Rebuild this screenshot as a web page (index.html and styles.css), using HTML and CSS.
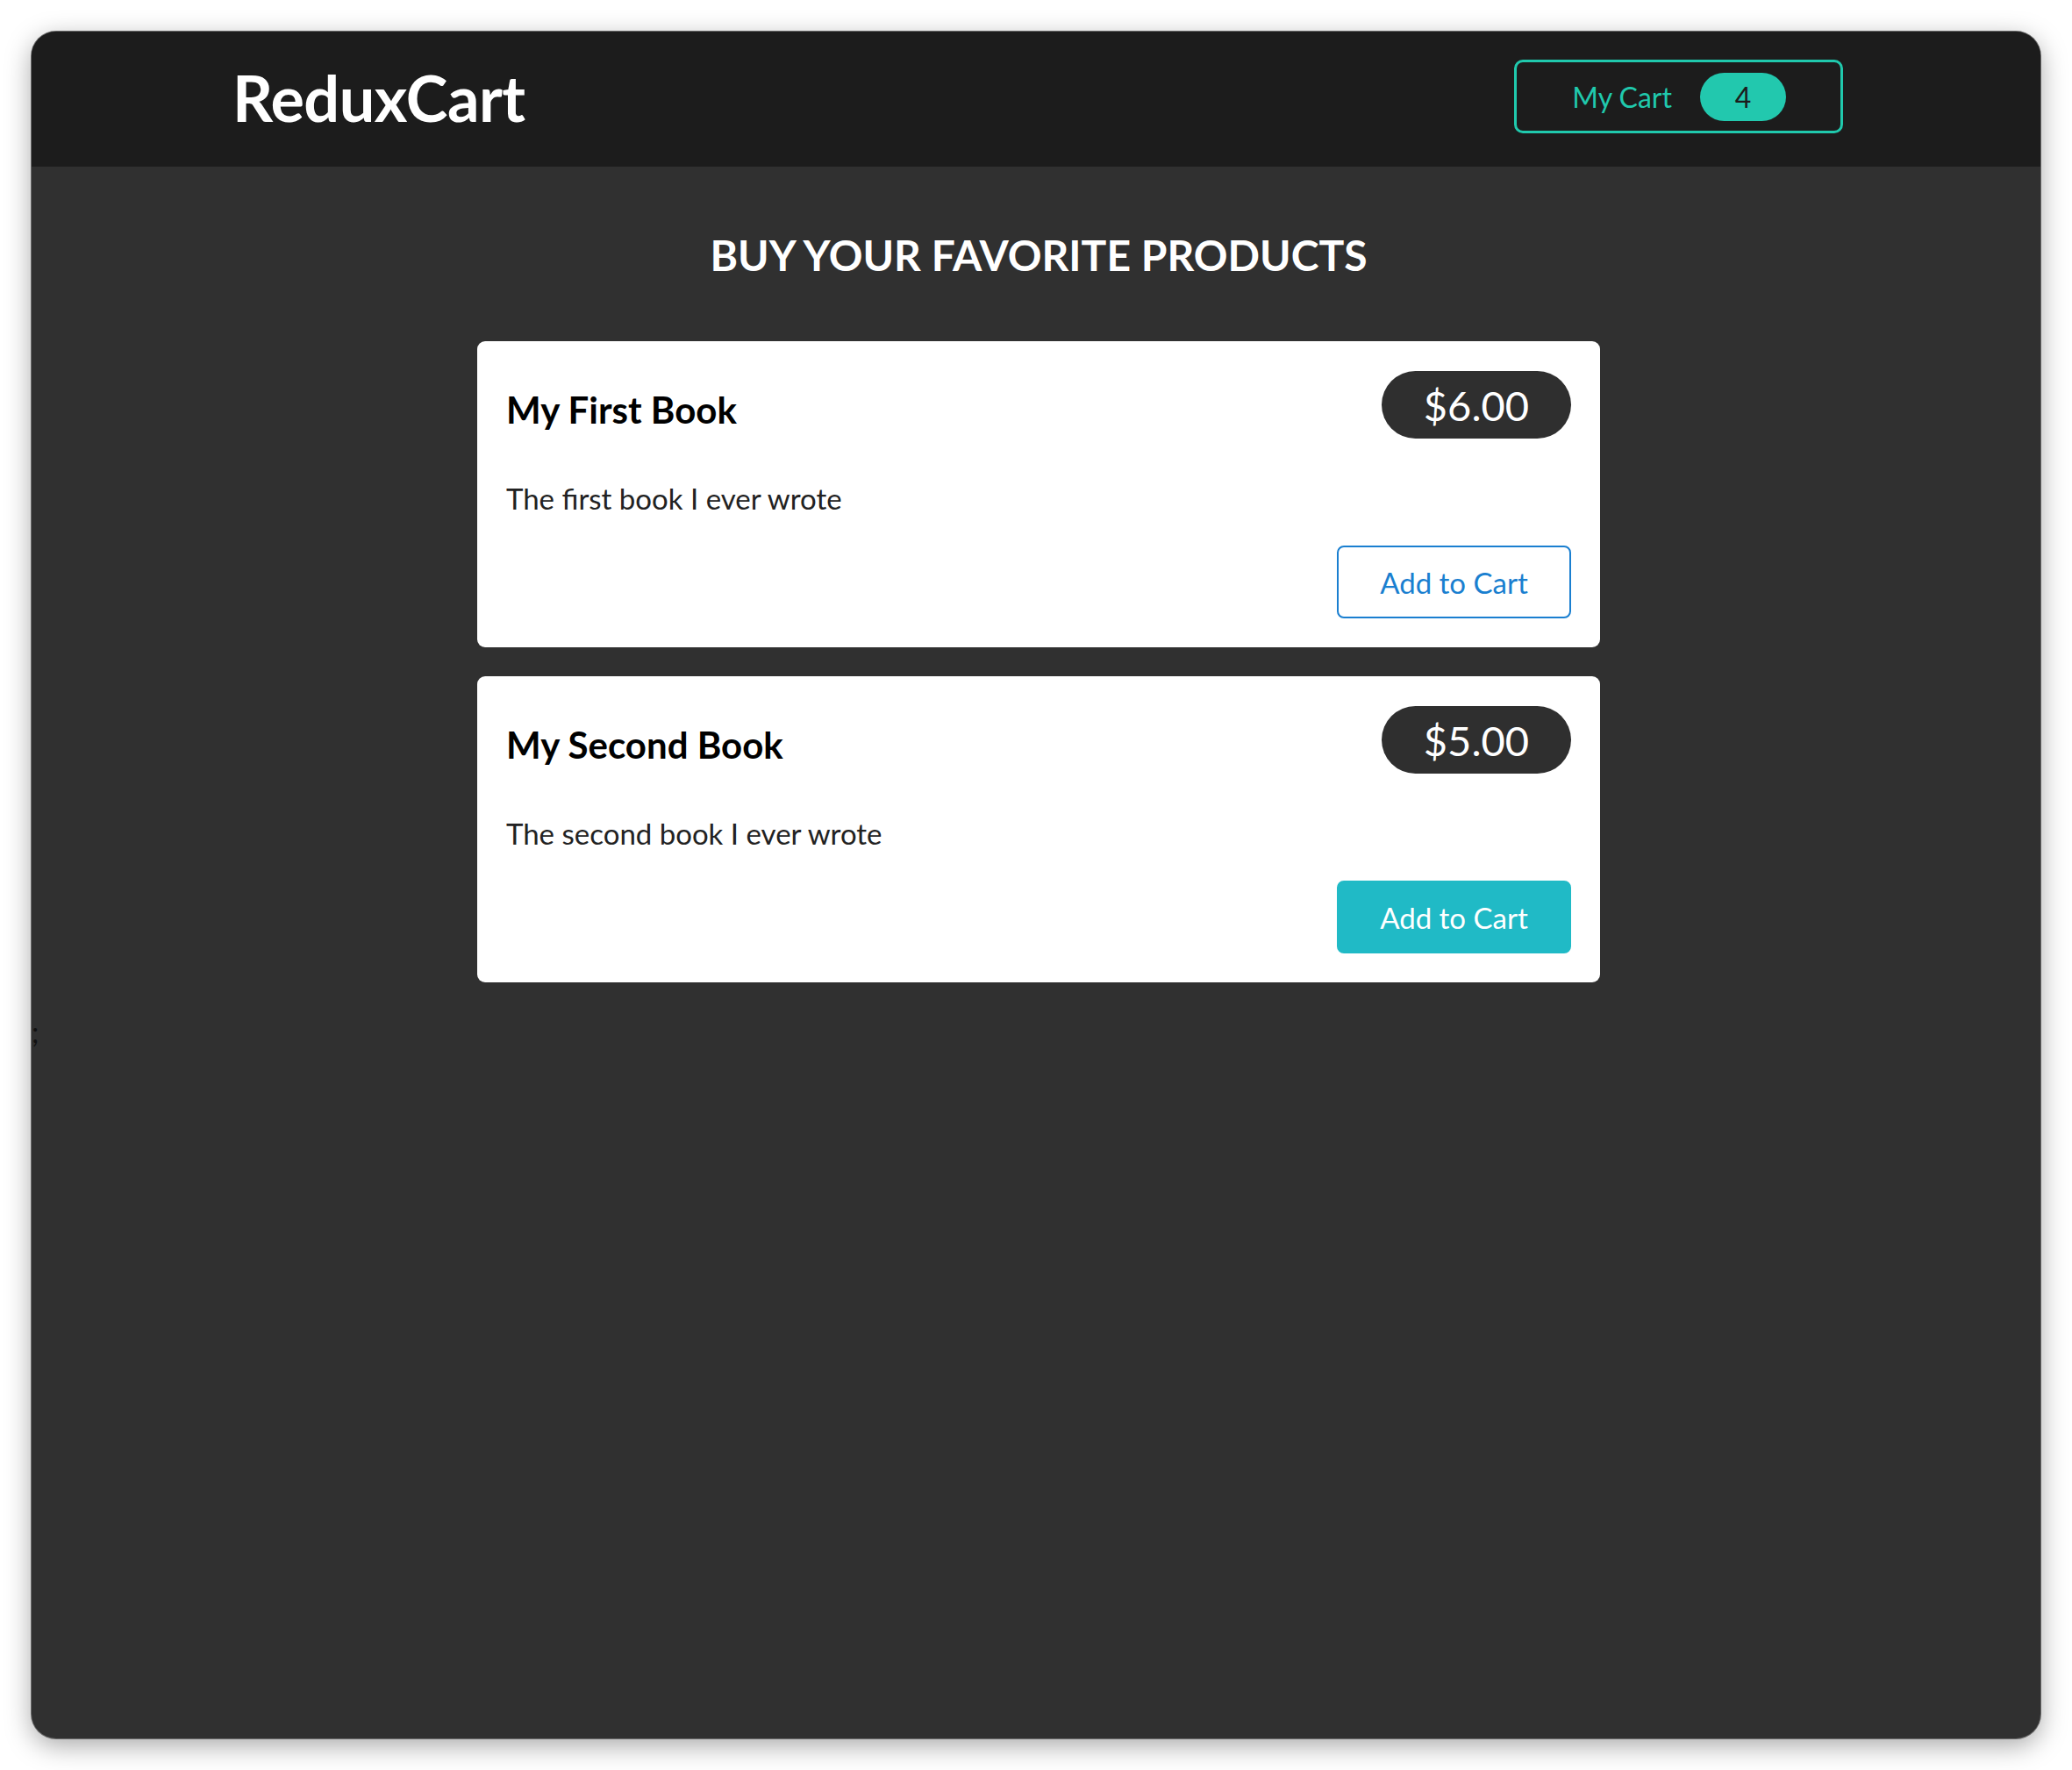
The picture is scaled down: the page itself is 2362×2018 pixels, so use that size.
FILE: index.html
```html
<!DOCTYPE html>
<html lang="en">
<head>
<meta charset="utf-8">
<title>ReduxCart</title>
<link rel="stylesheet" href="styles.css">
</head>
<body>
<div class="window">
  <header class="header">
    <h1 class="logo">ReduxCart</h1>
    <button class="cart-btn"><span>My Cart</span><span class="badge">4</span></button>
  </header>
  <main class="main">
    <section class="products">
      <h2 class="products-title">Buy your favorite products</h2>
      <ul class="list">
        <li class="card">
          <div class="item-head">
            <h3 class="item-title">My First Book</h3>
            <div class="price">$6.00</div>
          </div>
          <p class="item-desc">The first book I ever wrote</p>
          <div class="actions"><button class="btn btn-outline">Add to Cart</button></div>
        </li>
        <li class="card">
          <div class="item-head">
            <h3 class="item-title">My Second Book</h3>
            <div class="price">$5.00</div>
          </div>
          <p class="item-desc">The second book I ever wrote</p>
          <div class="actions"><button class="btn btn-fill">Add to Cart</button></div>
        </li>
      </ul>
    </section>
    <span class="stray">;</span>
  </main>
</div>
</body>
</html>
```

FILE: styles.css
```css
* { box-sizing: border-box; }

html, body {
  margin: 0;
  padding: 0;
  background: #ffffff;
}

body {
  padding: 36px;
  font-family: Lato, "Noto Sans", sans-serif;
}

.window {
  height: 1946px;
  border-radius: 28px;
  overflow: hidden;
  background: #303030;
  box-shadow: 0 0 0 1px #6a6a6a, 0 8px 30px rgba(0, 0, 0, 0.35);
  display: flex;
  flex-direction: column;
}

.header {
  height: 154px;
  flex: none;
  padding: 0 225px 0 229px;
  background: #1c1c1c;
  display: flex;
  justify-content: space-between;
  align-items: center;
}

.logo {
  margin: -4px 0 0;
  color: #ffffff;
  font-size: 72px;
  font-weight: 700;
  letter-spacing: -0.5px;
}

.cart-btn {
  margin-top: -6px;
  height: 84px;
  padding: 0 62px 0 63px;
  background: transparent;
  border: 3px solid #20c9ad;
  border-radius: 10px;
  color: #20c9ad;
  font-family: inherit;
  font-size: 32px;
  display: flex;
  align-items: center;
  gap: 32px;
}

.badge {
  height: 55px;
  min-width: 98px;
  border-radius: 30px;
  background: #22c8ae;
  color: #1c1c1c;
  font-size: 32px;
  display: flex;
  align-items: center;
  justify-content: center;
}

.main {
  flex: 1;
  padding-left: 6px;
}

.products {
  width: 1280px;
  margin: 0 auto;
}

.products-title {
  margin: 69px 0 66px;
  height: 64px;
  line-height: 64px;
  text-align: center;
  color: #ffffff;
  font-size: 48px;
  font-weight: 700;
  text-transform: uppercase;
}

.list {
  list-style: none;
  margin: 0;
  padding: 0;
  display: flex;
  flex-direction: column;
  gap: 33px;
}

.card {
  background: #ffffff;
  border-radius: 9px;
  padding: 34px 33px 33px;
}

.item-head {
  display: flex;
  justify-content: space-between;
  align-items: center;
}

.item-title {
  margin: 10px 0 0;
  font-size: 42px;
  font-weight: 700;
  color: #000000;
}

.price {
  height: 77px;
  padding: 0 48px;
  border-radius: 40px;
  background: #2f2f2f;
  color: #ffffff;
  font-size: 47px;
  display: flex;
  align-items: center;
}

.item-desc {
  margin: 49px 0 0;
  height: 38px;
  line-height: 38px;
  font-size: 33px;
  color: #222222;
}

.actions {
  margin-top: 35px;
  display: flex;
  justify-content: flex-end;
}

.btn {
  width: 267px;
  height: 83px;
  border-radius: 8px;
  font-family: inherit;
  font-size: 33px;
  display: flex;
  align-items: center;
  justify-content: center;
}

.btn-outline {
  background: #ffffff;
  border: 2px solid #1a7fd0;
  color: #1a7fd0;
}

.btn-fill {
  background: #20bac6;
  border: 2px solid #20bac6;
  color: #ffffff;
}

.stray {
  display: block;
  margin-top: 38px;
  margin-left: -6px;
  font-size: 32px;
  line-height: 38px;
  color: #111111;
}
```
